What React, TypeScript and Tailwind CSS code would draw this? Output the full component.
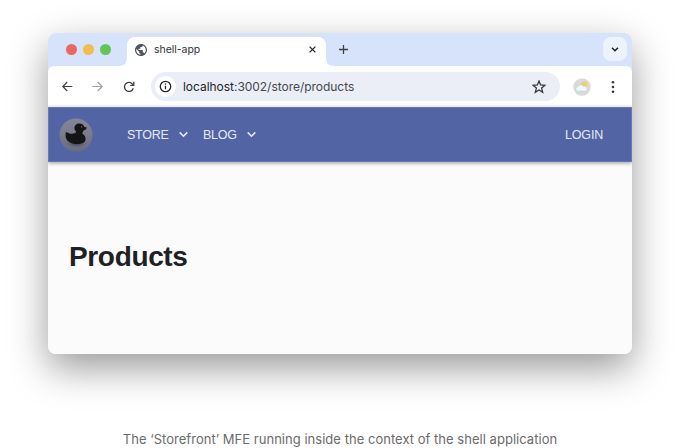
import React from "react";

function Globe() {
  return (
    <svg className="ml-[8px] size-[12px] shrink-0" viewBox="2 2 20 20" fill="#50555a">
      <path d="M12 2C6.48 2 2 6.48 2 12s4.48 10 10 10 10-4.48 10-10S17.52 2 12 2zm-1 17.93c-3.95-.49-7-3.85-7-7.93 0-.62.08-1.21.21-1.79L9 15v1c0 1.1.9 2 2 2v1.93zm6.9-2.54c-.26-.81-1-1.39-1.9-1.39h-1v-3c0-.55-.45-1-1-1H8v-2h2c.55 0 1-.45 1-1V7h2c1.1 0 2-.9 2-2v-.41c2.93 1.19 5 4.06 5 7.41 0 2.08-.8 3.97-2.1 5.39z" />
    </svg>
  );
}

function TabStrip() {
  return (
    <div className="flex h-[33px] items-end bg-[#d7e3fb]">
      <div className="flex h-[33px] w-[71px] items-center gap-[6px] pl-[18px]">
        <span className="size-[11px] rounded-full bg-[#e8695f]" />
        <span className="size-[11px] rounded-full bg-[#f2bd4e]" />
        <span className="size-[11px] rounded-full bg-[#62c655]" />
      </div>
      <svg className="h-[8px] w-[8px]" viewBox="0 0 8 8" fill="#fff">
        <path d="M8 0V8H0C5 8 8 5 8 0Z" />
      </svg>
      <div className="flex h-[29px] w-[199px] items-center rounded-t-[8px] bg-white pb-[4px]">
        <Globe />
        <span className="ml-[7px] w-[150px] font-['Inter',sans-serif] text-[10.5px] leading-[14px] tracking-[-0.04px] text-[#303236]">shell-app</span>
        <svg className="ml-[5px] size-[7px]" viewBox="0 0 7 7" stroke="#25272a" strokeWidth="1.3">
          <path d="M.6.6l5.8 5.8M6.4.6L.6 6.4" />
        </svg>
      </div>
      <svg className="h-[8px] w-[8px]" viewBox="0 0 8 8" fill="#fff">
        <path d="M0 0V8H8C3 8 0 5 0 0Z" />
      </svg>
      <svg className="mb-[12px] ml-[5px] size-[9px]" viewBox="0 0 9 9" stroke="#3c4043" strokeWidth="1.3">
        <path d="M4.5 0v9M0 4.5h9" />
      </svg>
      <div className="mb-[5px] ml-auto mr-[5px] flex size-[24px] items-center justify-center rounded-[8px] bg-[#edf3fd]">
        <svg className="h-[5px] w-[8px]" viewBox="0 0 8 5" fill="none" stroke="#202124" strokeWidth="1.5">
          <path d="M1 .8l3 3 3-3" />
        </svg>
      </div>
    </div>
  );
}

function AddressBar() {
  return (
    <div className="flex h-[41px] items-center bg-[#d7e3fb]">
      <div className="flex h-full w-full items-center rounded-t-[6px] bg-white">
        <svg className="ml-[14px] size-[11px]" viewBox="0 0 11 11" fill="none" stroke="#3c3e41" strokeWidth="1.2">
          <path d="M10.4 5.5H.8M5.2 1L.8 5.5 5.2 10" />
        </svg>
        <svg className="ml-[19px] size-[11px]" viewBox="0 0 11 11" fill="none" stroke="#a0a2a5" strokeWidth="1.2">
          <path d="M.3 5.5h9.9M5.7 1l4.5 4.5L5.7 10" />
        </svg>
        <svg className="ml-[20px] size-[12px]" viewBox="0 0 12 12" fill="none" stroke="#3c3e41" strokeWidth="1.3">
          <path d="M10.3 7.2A4.5 4.5 0 1 1 9.3 2.9L10.5 4" />
          <path d="M10.8 .8V4.3H7.3" />
        </svg>
        <div className="ml-[16px] flex h-[29px] w-[409px] items-center rounded-full bg-[#ebeef7]">
          <div className="ml-[4px] flex size-[21px] items-center justify-center rounded-full bg-white">
            <svg className="size-[13px]" viewBox="0 0 13 13" fill="none" stroke="#242629" strokeWidth="1.3">
              <circle cx="6.5" cy="6.5" r="5.2" />
              <path d="M6.5 5.8v3.5M6.5 3.5v1.3" />
            </svg>
          </div>
          <span className="ml-[7px] whitespace-nowrap font-['Inter',sans-serif] text-[12px] leading-[16px] tracking-[-0.035px] text-[#45474c]">
            <span className="text-[#242629]">localhost</span>:3002/store/products
          </span>
          <svg className="ml-auto mr-[14px] size-[14px]" viewBox="0 0 14 14" fill="none" stroke="#36383b" strokeWidth="1.3">
            <path d="M7 1l1.6 4 4.4.3-3.4 2.8 1.1 4.2L7 10l-3.7 2.3 1.1-4.2L1 5.3 5.4 5z" />
          </svg>
        </div>
        <svg className="ml-[13px] size-[18px]" viewBox="0 0 18 18">
          <circle cx="9" cy="9" r="8.7" fill="#dadada" />
          <circle cx="11.3" cy="7" r="3.5" fill="#f6cc69" />
          <path d="M5.2 13.2a2.3 2.3 0 0 1-.2-4.6A3.1 3.1 0 0 1 10.6 8.3a2.5 2.5 0 0 1 2 4.9z" fill="#f3f8ff" stroke="#a5cdf5" strokeWidth=".6" />
        </svg>
        <svg className="ml-[20px] h-[14px] w-[4px]" viewBox="0 0 4 14" fill="#36383b">
          <circle cx="2" cy="2.3" r="1.3" />
          <circle cx="2" cy="7" r="1.3" />
          <circle cx="2" cy="11.7" r="1.3" />
        </svg>
      </div>
    </div>
  );
}

function Chevron() {
  return (
    <svg className="h-[7px] w-[9px]" viewBox="0 0 9 7" fill="none" stroke="#e6e9f5" strokeWidth="1.6">
      <path d="M.7 1.4l3.8 3.8 3.8-3.8" />
    </svg>
  );
}

function NavBar() {
  return (
    <nav className="relative flex h-[55px] items-center border border-[#6976b8] bg-[#5264a4] font-['Liberation_Sans',sans-serif] text-[12.5px] leading-[16px] text-[#e6e9f5] shadow-[0_1px_4px_rgba(0,0,0,0.4)]">
      <svg className="ml-[10px] size-[34px]" viewBox="0 0 34 34">
        <defs>
          <linearGradient id="disc" x1="0" y1="0" x2="0" y2="1">
            <stop offset="0" stopColor="#858799" />
            <stop offset=".6" stopColor="#77798a" />
            <stop offset="1" stopColor="#696c7f" />
          </linearGradient>
          <radialGradient id="shade">
            <stop offset="0" stopColor="#272831" stopOpacity=".7" />
            <stop offset="1" stopColor="#4b4c5a" stopOpacity="0" />
          </radialGradient>
        </defs>
        <circle cx="17" cy="17" r="16.5" fill="url(#disc)" />
        <ellipse cx="17.5" cy="25.5" rx="11" ry="4" fill="url(#shade)" />
        <path d="M6.8 14.2c1.6-.3 3.4 1.6 5.8 1.6 2.4 0 4.4-.5 4.4-1.7 0-.9-1.6-1.7-1.6-4 0-2.7 2.2-4.6 5-4.6 2.7 0 4.5 1.6 4.9 3.5l2.3.3c.1 1.8-1.3 2.9-2.9 3-.5 1.3-1.3 2.1-1.3 2.8 0 1.2 3.2 2.2 3.2 5.8 0 3.2-3.2 5.1-8.5 5.1-6.8 0-11.5-3.4-11.5-8.1 0-1.5 0-3 .2-3.7z" fill="#151518" />
        <circle cx="22.6" cy="8.9" r=".7" fill="#73747e" />
      </svg>
      <div className="ml-[34px] flex items-center">
        <span className="w-[52px] tracking-[-0.25px]">STORE</span>
        <Chevron />
        <span className="ml-[15px] w-[44px] tracking-[-0.25px]">BLOG</span>
        <Chevron />
      </div>
      <span className="ml-auto mr-[28px] tracking-[-0.2px]">LOGIN</span>
    </nav>
  );
}

export default function App() {
  return (
    <div className="flex h-[448px] w-[680px] flex-col items-center overflow-hidden bg-white pt-[33px]">
      <main className="h-[321px] w-[584px] shrink-0 rounded-[8px] shadow-[0_14px_38px_rgba(0,0,0,0.4)]">
        <div className="h-full overflow-hidden rounded-[8px] bg-[#fbfbfb]">
          <TabStrip />
          <AddressBar />
          <NavBar />
          <h1 className="ml-[21px] mt-[78px] font-['Liberation_Sans',sans-serif] text-[28px] font-bold leading-[34px] tracking-[-0.35px] text-[#202124]">Products</h1>
        </div>
      </main>
      <p className="mt-[75px] whitespace-nowrap font-['Inter',sans-serif] text-[13px] leading-[20px] tracking-[0.028px] text-[#6b6b6b]">
        The ‘Storefront’ MFE running inside the context of the shell application
      </p>
    </div>
  );
}
